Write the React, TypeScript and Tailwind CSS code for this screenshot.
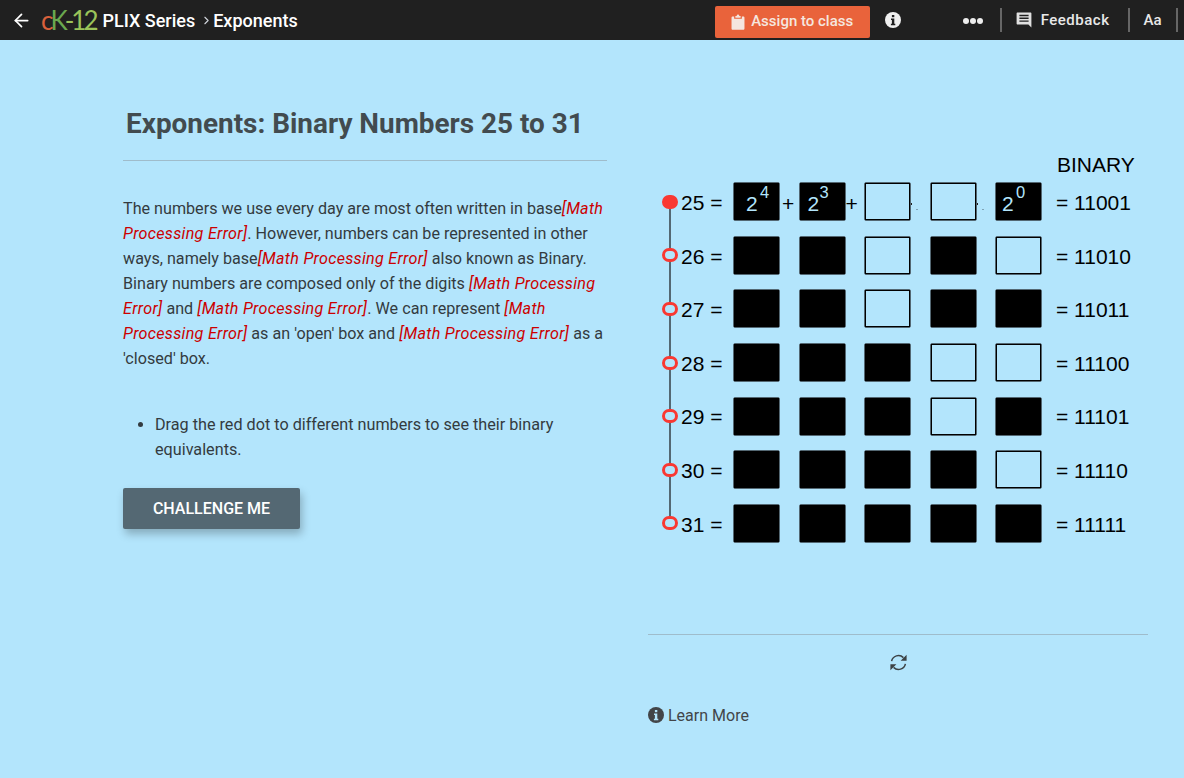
import React from "react";
import { ArrowLeft, ChevronRight } from "lucide-react";

const rows = [
  { n: 25, bits: "11001" },
  { n: 26, bits: "11010" },
  { n: 27, bits: "11011" },
  { n: 28, bits: "11100" },
  { n: 29, bits: "11101" },
  { n: 30, bits: "11110" },
  { n: 31, bits: "11111" },
];

// the first row shows the powers, each placed a little differently inside its box
const powers: Record<number, { label: string; base: string; sup: string }> = {
  0: { label: "4", base: "left-[11px]", sup: "left-[14px]" },
  1: { label: "3", base: "left-[7px]", sup: "left-[12px]" },
  4: { label: "0", base: "left-[5px]", sup: "left-[14px]" },
};

const MathError: React.FC = () => (
  <em className="text-[#cc0000] tracking-[0.28px]">[Math Processing Error]</em>
);

const ClipboardIcon = () => (
  <svg viewBox="0 0 16 18" className="w-[14px] h-4 fill-[#f5e6df]">
    <path d="M5 2.2h1.4C6.6 1 7.2.4 8 .4s1.4.6 1.6 1.8H11v2H5z" />
    <path d="M3.6 2.6v2.8h8.8V2.6h1.6c.8 0 1.4.6 1.4 1.4v12.4c0 .8-.6 1.4-1.4 1.4H2c-.8 0-1.4-.6-1.4-1.4V4c0-.8.6-1.4 1.4-1.4z" />
  </svg>
);

const FeedbackIcon = () => (
  <svg viewBox="0 0 16 16" className="ml-[14px] mb-[1px] w-4 h-4">
    <path d="M1.6 .6h12.8c.6 0 1 .4 1 1V15.6L12.4 12.6H1.6c-.6 0-1-.4-1-1V1.6c0-.6.4-1 1-1z" fill="#e0e0e0" />
    <path d="M3.4 2.8h9.2v1.4H3.4zM3.4 5.6h9.2V7H3.4zM3.4 8.4h9.2v1.4H3.4z" fill="#202020" />
  </svg>
);

const RefreshIcon = () => (
  <svg viewBox="0 0 17 17" className="w-[17px] h-[17px]">
    <path d="M1.6 7.2A7 7 0 0 1 13.4 3.6M15.4 9.8A7 7 0 0 1 3.6 13.4" fill="none" stroke="#3c4245" strokeWidth="1.5" />
    <path d="M16.6 .8v6h-6zM.4 16.2v-6h6z" fill="#3c4245" />
  </svg>
);

const InfoDot: React.FC<{ className: string; dotClass: string }> = ({ className, dotClass }) => (
  <svg viewBox="0 0 16 16" className={className}>
    <circle cx="8" cy="8" r="8" />
    <rect x="6.9" y="3" width="2.4" height="2.2" className={dotClass} />
    <path d="M6 6.6h3.3v5.2h1v1.4H5.9v-1.4h1V8H6z" className={dotClass} />
  </svg>
);

const Box: React.FC<{ filled: boolean; power?: { label: string; base: string; sup: string } }> = ({ filled, power }) => (
  <div className="w-[47px] h-[39px] rounded-[2px] border border-[#546873]">
    <div className={`relative h-full border border-black ${filled ? "bg-black" : "bg-transparent"}`}>
      {power && (
        <span className={`absolute ${power.base} top-[8px] text-[21px] leading-6 text-[#b3e5fc]`}>
          2
          <sup className={`absolute ${power.sup} top-[-8px] text-[16.5px] leading-4`}>{power.label}</sup>
        </span>
      )}
    </div>
  </div>
);

const App: React.FC = () => {
  return (
    <div className="h-[778px] w-[1184px] overflow-hidden bg-[#b3e5fc] font-['Roboto',sans-serif]">

      {/* Top bar */}
      <header className="h-10 bg-[#202020] flex items-center text-white">
        <ArrowLeft className="w-[21px] h-[21px] ml-[11px]" strokeWidth={2} />
        <div className="ml-[9px] flex items-baseline text-[26px] leading-none font-['Lato',sans-serif] tracking-[-3px]">
          <span className="text-[#d9603b]">c</span>
          <span className="text-[#6aa84f]">K</span>
          <span className="text-[#9bc45a]">-12</span>
        </div>
        <span className="ml-[7px] text-[18px] font-medium">PLIX Series</span>
        <ChevronRight className="w-[13px] h-[13px] ml-[5px] text-gray-300" />
        <span className="text-[18px] font-medium">Exponents</span>

        <button className="ml-[417px] mt-[3px] w-[155px] h-[32px] rounded-[2px] bg-[#e9633b] flex items-center justify-center gap-[6px] text-[15px] font-medium text-[#f5e6df]">
          <ClipboardIcon />
          Assign to class
        </button>
        <InfoDot className="ml-[15px] w-4 h-4 fill-[#f0f0f0]" dotClass="fill-[#202020]" />
        <div className="ml-[62px] mt-[2px] flex gap-[1px]">
          <span className="w-[6px] h-[6px] rounded-full bg-[#eeeeee]" />
          <span className="w-[6px] h-[6px] rounded-full bg-[#eeeeee]" />
          <span className="w-[6px] h-[6px] rounded-full bg-[#eeeeee]" />
        </div>
        <div className="ml-[17px] w-[2px] h-6 bg-[#666666]" />
        <FeedbackIcon />
        <span className="ml-[9px] text-[15px] font-medium text-[#e8e8e8] tracking-[0.5px]">Feedback</span>
        <div className="ml-[18px] w-[2px] h-6 bg-[#666666]" />
        <span className="ml-[14px] text-[15px] font-medium text-[#e8e8e8]">Aa</span>
        <div className="ml-[14px] w-[2px] h-6 bg-[#666666]" />
      </header>

      <main className="flex pl-[123px]">

        {/* Left column */}
        <section className="w-[484px] pt-[65px]">
          <h1 className="pl-[3px] text-[27.9px] leading-[38px] font-bold text-[#424b4f]">
            Exponents: Binary Numbers 25 to 31
          </h1>
          <div className="mt-[17px] h-px bg-[#9fbccb]" />
          <p className="mt-[35px] text-[16.15px] leading-[25px] text-[#333b40]">
            The numbers we use every day are most often written in base<MathError />. However, numbers can be
            represented in other ways, namely base<MathError /> also known as Binary. Binary numbers are composed
            only of the digits <MathError /> and <MathError />. We can represent <MathError /> as an 'open' box
            and <MathError /> as a 'closed' box.
          </p>
          <ul className="mt-[41px] pl-[32px] list-disc text-[16.2px] leading-[25px] text-[#333b40]">
            <li>Drag the red dot to different numbers to see their binary equivalents.</li>
          </ul>
          <button className="mt-[26px] w-[177px] h-[41px] pt-[1px] rounded-[2px] bg-[#546873] text-white text-[16px] font-medium shadow-[2px_5px_8px_rgba(0,0,0,0.25)]">
            CHALLENGE ME
          </button>
        </section>

        {/* Right column */}
        <section className="ml-[41px] w-[500px]">
          <div className="mt-[113px] pl-[409px] text-[21px] leading-6 text-black font-['Liberation_Sans',sans-serif]">
            BINARY
          </div>
          <div className="relative mt-[-2px] font-['Liberation_Sans',sans-serif] text-black">
            <div className="absolute left-[21px] top-[26px] w-[2px] h-[322px] bg-[#546873]" />
            {rows.map((row, i) => (
              <div key={row.n} className="relative flex items-center h-[53.6px]">
                <span
                  className={`ml-[14px] w-4 h-[14px] rounded-full border-[3px] border-[#f93832] ${i === 0 ? "bg-[#f93832]" : "bg-[#b3e5fc]"}`}
                />
                <span className="ml-[3px] mt-[2.4px] w-[52px] text-[21px] leading-6">{row.n} =</span>
                <div className="flex w-[322px] gap-[18.5px]">
                  {row.bits.split("").map((bit, j) => (
                    <div key={j} className="relative">
                      <Box filled={bit === "1"} power={i === 0 ? powers[j] : undefined} />
                      {i === 0 && j === 0 && (
                        <span className="absolute left-[49px] top-[10px] text-[21px] leading-6">+</span>
                      )}
                      {i === 0 && j === 1 && (
                        <span className="absolute left-[47px] top-[10px] text-[21px] leading-6">+</span>
                      )}
                      {i === 0 && (j === 2 || j === 3) && (
                        <>
                          <span className="absolute left-[47px] top-[21px] w-px h-[2px] bg-[#222222]" />
                          <span className="absolute left-[52px] top-[27px] w-[2px] h-px bg-[#7fa3b5]" />
                        </>
                      )}
                    </div>
                  ))}
                </div>
                <span className="ml-[1px] mt-[2.4px] text-[21px] leading-6">= {row.bits}</span>
              </div>
            ))}
          </div>

          <div className="mt-[84px] h-px bg-[#9fbccb]" />
          <div className="mt-[19px] flex justify-center">
            <RefreshIcon />
          </div>
          <div className="mt-[33px] flex items-center gap-[4px] text-[16px] leading-6 text-[#424548]">
            <InfoDot className="w-4 h-4 fill-[#424548] mb-[2px]" dotClass="fill-[#b3e5fc]" />
            Learn More
          </div>
        </section>
      </main>
    </div>
  );
};

export default App;
